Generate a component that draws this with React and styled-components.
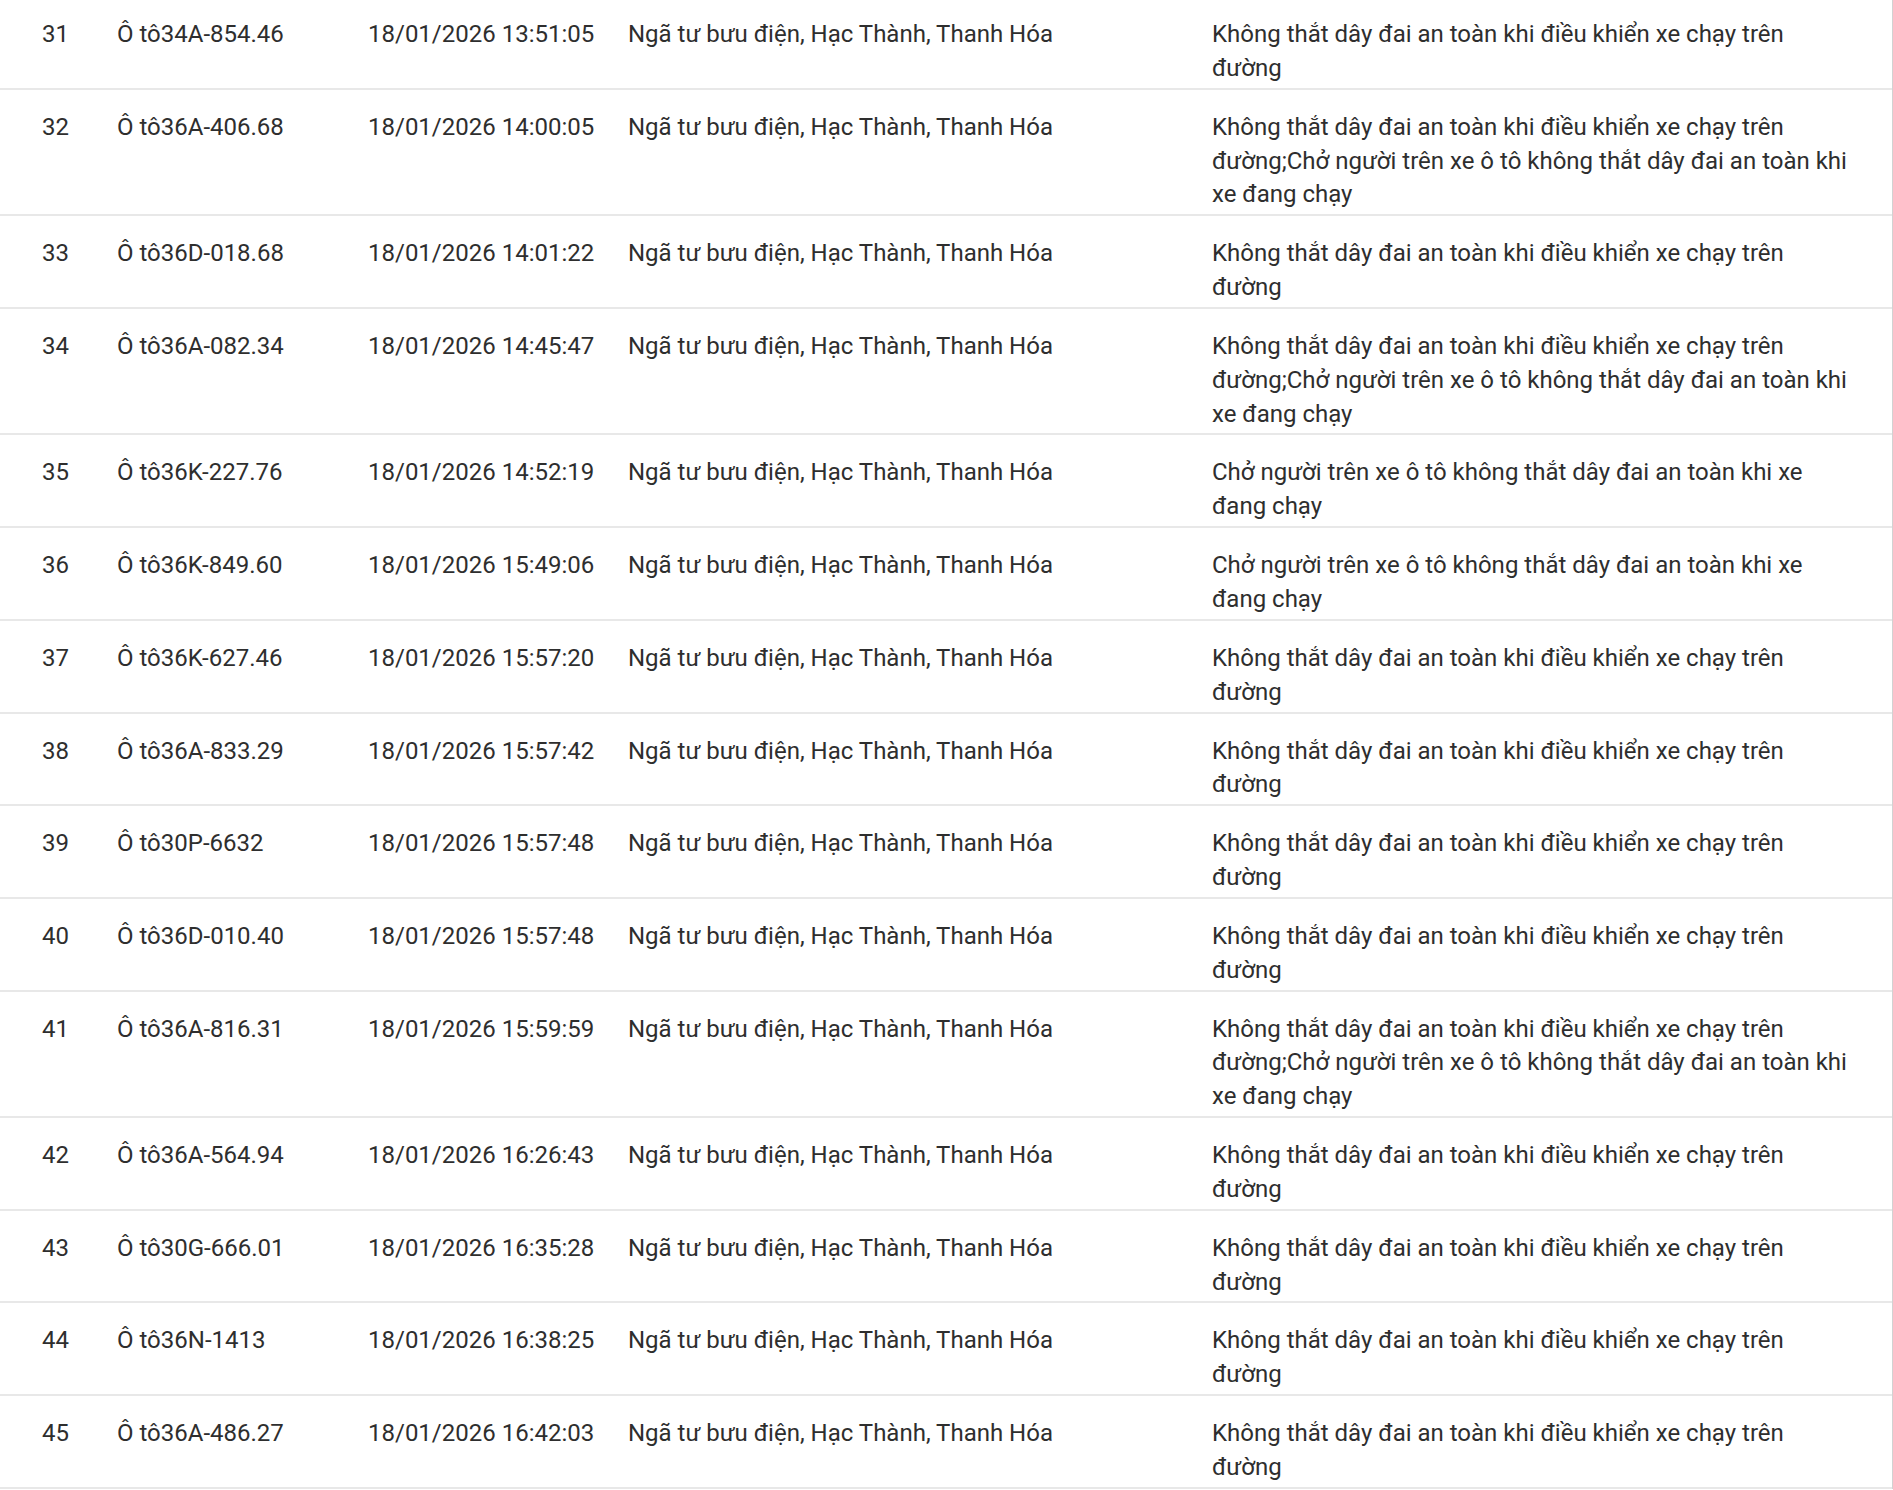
import styled, { createGlobalStyle } from 'styled-components'

const GlobalStyle = createGlobalStyle`
    html, body {
        margin: 0;
        padding: 0;
        background: #ffffff;
    }
`

const SEATBELT = 'Không thắt dây đai an toàn khi điều khiển xe chạy trên đường'
const PASSENGER = 'Chở người trên xe ô tô không thắt dây đai an toàn khi xe đang chạy'
const BOTH = SEATBELT + ';' + PASSENGER
const PLACE = 'Ngã tư bưu điện, Hạc Thành, Thanh Hóa'

const violations = [
    { no: 31, plate: '34A-854.46', time: '13:51:05', text: SEATBELT },
    { no: 32, plate: '36A-406.68', time: '14:00:05', text: BOTH },
    { no: 33, plate: '36D-018.68', time: '14:01:22', text: SEATBELT },
    { no: 34, plate: '36A-082.34', time: '14:45:47', text: BOTH },
    { no: 35, plate: '36K-227.76', time: '14:52:19', text: PASSENGER },
    { no: 36, plate: '36K-849.60', time: '15:49:06', text: PASSENGER },
    { no: 37, plate: '36K-627.46', time: '15:57:20', text: SEATBELT },
    { no: 38, plate: '36A-833.29', time: '15:57:42', text: SEATBELT },
    { no: 39, plate: '30P-6632', time: '15:57:48', text: SEATBELT },
    { no: 40, plate: '36D-010.40', time: '15:57:48', text: SEATBELT },
    { no: 41, plate: '36A-816.31', time: '15:59:59', text: BOTH },
    { no: 42, plate: '36A-564.94', time: '16:26:43', text: SEATBELT },
    { no: 43, plate: '30G-666.01', time: '16:35:28', text: SEATBELT },
    { no: 44, plate: '36N-1413', time: '16:38:25', text: SEATBELT },
    { no: 45, plate: '36A-486.27', time: '16:42:03', text: SEATBELT },
]

// list is scrolled a few pixels, so the first row is cut at the top
const Table = styled.div`
    margin-top: -3px;
    width: 1893px;
    box-sizing: border-box;
    border-right: 1px solid #d2d2d2;
    font-family: Roboto, 'Noto Sans', sans-serif;
    font-size: 24px;
    line-height: 33.85px;
    color: #2e2e2e;
`

const Row = styled.div`
    display: grid;
    grid-template-columns: 75px 251px 260px 584px 1fr;
    padding: 21px 42px 2px 42px;
    border-bottom: 2px solid #e8e8e8;
`

const Cell = styled.div`
    white-space: ${({ $wrap }) => ($wrap ? 'normal' : 'nowrap')};
`

export default function App() {
    return (
        <>
            <GlobalStyle />
            <Table>
                {violations.map((v) => (
                    <Row key={v.no}>
                        <Cell>{v.no}</Cell>
                        <Cell>Ô tô{v.plate}</Cell>
                        <Cell>18/01/2026 {v.time}</Cell>
                        <Cell>{PLACE}</Cell>
                        <Cell $wrap>{v.text}</Cell>
                    </Row>
                ))}
            </Table>
        </>
    )
}
